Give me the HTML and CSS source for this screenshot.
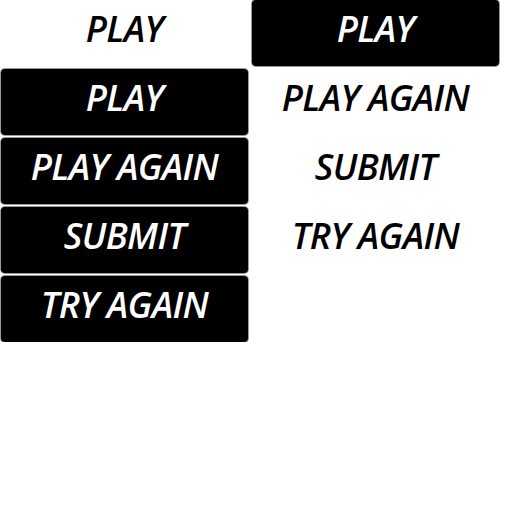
FILE: index.html
```html
<!DOCTYPE html>
<html>
<head>
<meta charset="utf-8">
<link rel="stylesheet" href="styles.css">
</head>
<body>
<div class="grid">
  <div class="item">PLAY</div>
  <div class="item dark">PLAY</div>
  <div class="item dark">PLAY</div>
  <div class="item">PLAY AGAIN</div>
  <div class="item dark">PLAY AGAIN</div>
  <div class="item">SUBMIT</div>
  <div class="item dark">SUBMIT</div>
  <div class="item">TRY AGAIN</div>
  <div class="item dark">TRY AGAIN</div>
</div>
</body>
</html>
```
FILE: styles.css
```css
html, body {
  margin: 0;
  padding: 0;
  background: #fff;
}
.grid {
  display: grid;
  grid-template-columns: 247px 247px;
  grid-auto-rows: 66px;
  column-gap: 4px;
  row-gap: 3px;
  padding-left: 1px;
}
.item {
  display: flex;
  align-items: center;
  justify-content: center;
  font-family: "Open Sans", sans-serif;
  font-weight: 600;
  font-style: italic;
  font-size: 36px;
  color: #000;
  padding-bottom: 10px;
  box-sizing: border-box;
  letter-spacing: -0.6px;
}
.dark {
  background: #000;
  color: #fff;
  border-radius: 4px;
  box-shadow: 0 0 0 1px #999;
}
```
